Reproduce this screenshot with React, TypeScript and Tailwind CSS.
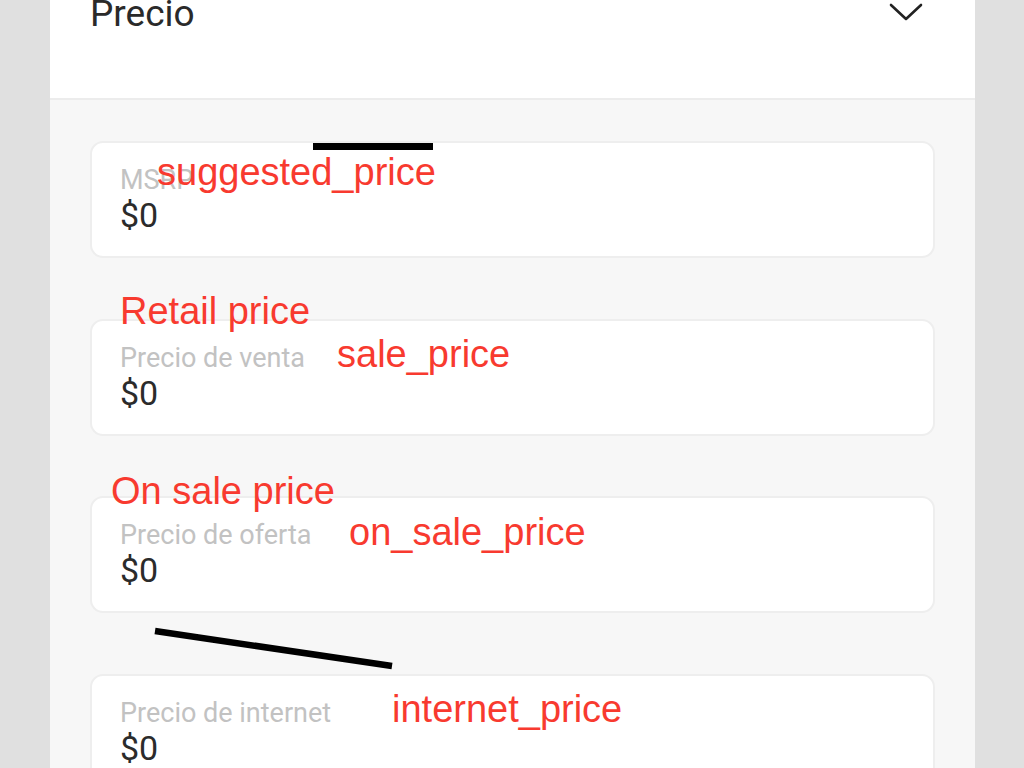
import React from "react";

const fields = [
  { label: "MSRP" },
  { label: "Precio de venta" },
  { label: "Precio de oferta" },
  { label: "Precio de internet" },
];

const notes: { text: string; x: number; y: number }[] = [
  { text: "suggested_price", x: 157, y: 154 },
  { text: "Retail price", x: 120, y: 293 },
  { text: "sale_price", x: 337, y: 336 },
  { text: "On sale price", x: 111, y: 473 },
  { text: "on_sale_price", x: 349, y: 514 },
  { text: "internet_price", x: 392, y: 691 },
];

export default function App() {
  return (
    <div className="relative w-[1024px] h-[768px] overflow-hidden bg-[#e0e0e0] flex justify-center">
      <div className="w-[925px] ml-[1px] h-full flex flex-col bg-[#f7f7f7]" style={{ fontFamily: "Roboto, sans-serif" }}>
        <div className="h-[100px] shrink-0 bg-white border-b-2 border-[#ececec] flex items-start justify-between pl-[40px] pr-[52px]">
          <div className="text-[37px] leading-[40px] mt-[-6px] text-[#2a2a2a]">Precio</div>
          <svg width="34" height="20" viewBox="0 0 34 20" className="mt-[2px]" fill="none">
            <path d="M2 3 L17 17 L32 3" stroke="#222" strokeWidth="2.6" strokeLinecap="round" strokeLinejoin="round" />
          </svg>
        </div>
        <div className="flex flex-col gap-[60.7px] pt-[41px] px-[40px]">
          {fields.map((f) => (
            <div key={f.label} className="h-[117px] shrink-0 bg-white border-2 border-[#eeeeee] rounded-[13px] pl-[28px] pt-[21px] flex flex-col">
              <div className="text-[27px] leading-[32px] text-[#c2c2c2]">{f.label}</div>
              <div className="text-[34px] leading-[38px] text-[#2b2b2b]">$0</div>
            </div>
          ))}
        </div>
      </div>

      <div className="absolute left-[313px] top-[143px] w-[120px] h-[7px] bg-black" />
      <svg className="absolute left-0 top-0 pointer-events-none" width="1024" height="768">
        <line x1="155" y1="631" x2="392" y2="666" stroke="#000" strokeWidth="6.5" />
      </svg>

      {notes.map((n) => (
        <div
          key={n.text}
          className="absolute text-[38px] leading-[37px] text-[#f83a2f] whitespace-nowrap"
          style={{ left: n.x, top: n.y, fontFamily: '"Liberation Sans", Arial, sans-serif' }}
        >
          {n.text}
        </div>
      ))}
    </div>
  );
}
